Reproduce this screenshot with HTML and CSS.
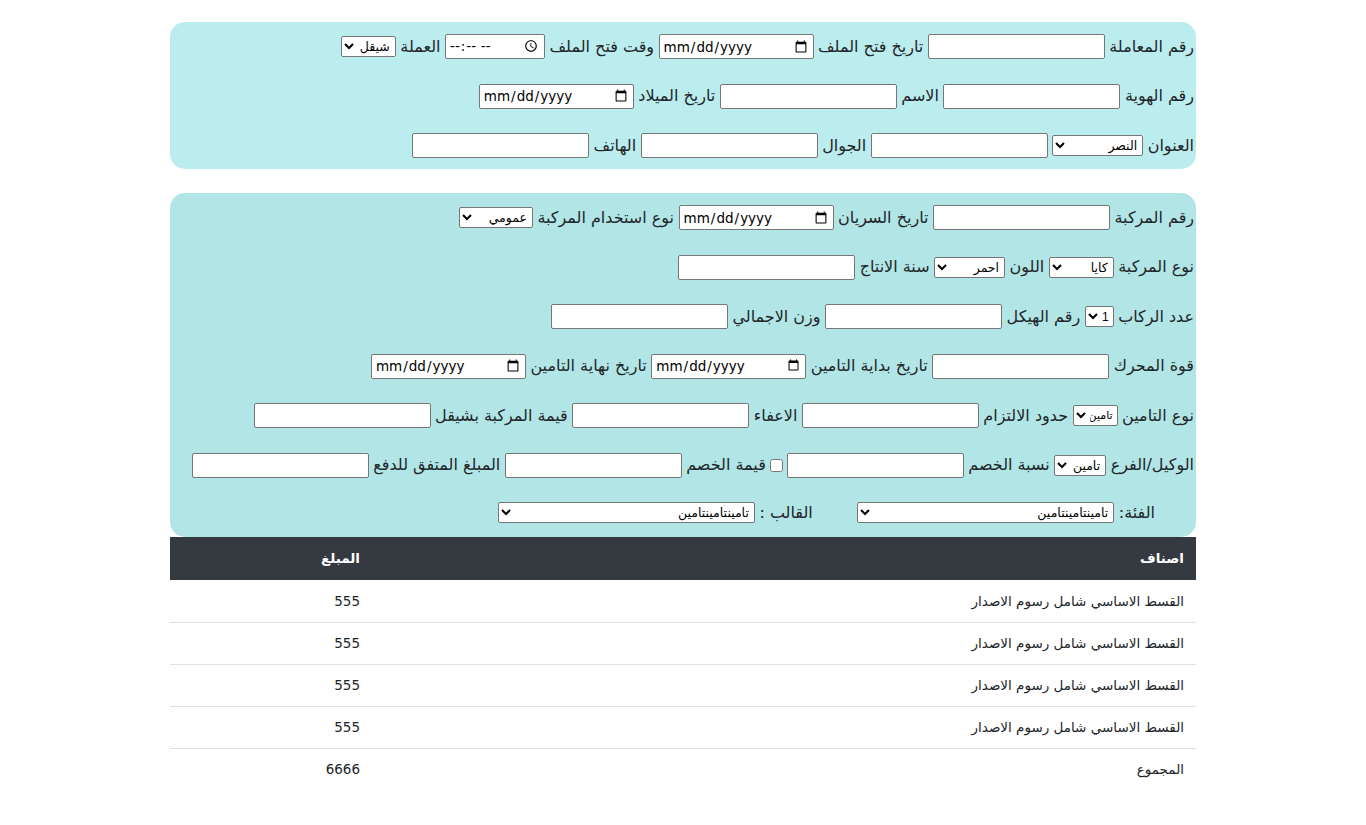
FILE: index.html
```html
<!DOCTYPE html>
<html lang="ar" dir="rtl">
<head>
<meta charset="utf-8">
<title>وثيقة تأمين مركبة</title>
<link rel="stylesheet" href="styles.css">
</head>
<body>
<main class="page">
  <section class="panel panel-client">
    <div class="row">
      <label class="lbl">رقم المعاملة</label>
      <input type="text" class="field">
      <label class="lbl">تاريخ فتح الملف</label>
      <input type="date" class="field field-date">
      <label class="lbl">وقت فتح الملف</label>
      <input type="time" class="field field-time">
      <label class="lbl">العملة</label>
      <select class="sel sel-currency"><option>شيقل</option></select>
    </div>
    <div class="row">
      <label class="lbl">رقم الهوية</label>
      <input type="text" class="field">
      <label class="lbl">الاسم</label>
      <input type="text" class="field">
      <label class="lbl">تاريخ الميلاد</label>
      <input type="date" class="field field-date">
    </div>
    <div class="row">
      <label class="lbl">العنوان</label>
      <select class="sel sel-city"><option>النصر</option></select>
      <input type="text" class="field">
      <label class="lbl">الجوال</label>
      <input type="text" class="field">
      <label class="lbl">الهاتف</label>
      <input type="text" class="field">
    </div>
  </section>

  <section class="panel panel-vehicle">
    <div class="row">
      <label class="lbl">رقم المركبة</label>
      <input type="text" class="field">
      <label class="lbl">تاريخ السريان</label>
      <input type="date" class="field field-date">
      <label class="lbl">نوع استخدام المركبة</label>
      <select class="sel sel-usage"><option>عمومي</option></select>
    </div>
    <div class="row">
      <label class="lbl">نوع المركبة</label>
      <select class="sel sel-make"><option>كايا</option></select>
      <label class="lbl">اللون</label>
      <select class="sel sel-color"><option>احمر</option></select>
      <label class="lbl">سنة الانتاج</label>
      <input type="text" class="field">
    </div>
    <div class="row">
      <label class="lbl">عدد الركاب</label>
      <select class="sel sel-seats" lang="en"><option>1</option></select>
      <label class="lbl">رقم الهيكل</label>
      <input type="text" class="field">
      <label class="lbl">وزن الاجمالي</label>
      <input type="text" class="field">
    </div>
    <div class="row">
      <label class="lbl">قوة المحرك</label>
      <input type="text" class="field">
      <label class="lbl">تاريخ بداية التامين</label>
      <input type="date" class="field field-date">
      <label class="lbl">تاريخ نهاية التامين</label>
      <input type="date" class="field field-date">
    </div>
    <div class="row">
      <label class="lbl">نوع التامين</label>
      <select class="sel sel-ins"><option>تامين</option></select>
      <label class="lbl">حدود الالتزام</label>
      <input type="text" class="field">
      <label class="lbl">الاعفاء</label>
      <input type="text" class="field">
      <label class="lbl">قيمة المركبة بشيقل</label>
      <input type="text" class="field">
    </div>
    <div class="row">
      <label class="lbl">الوكيل/الفرع</label>
      <select class="sel sel-agent"><option>تامين</option></select>
      <label class="lbl">نسبة الخصم</label>
      <input type="text" class="field">
      <input type="checkbox" class="check">
      <label class="lbl">قيمة الخصم</label>
      <input type="text" class="field">
      <label class="lbl">المبلغ المتفق للدفع</label>
      <input type="text" class="field">
    </div>
    <div class="row row-meta">
      <label class="lbl">الفئة:</label>
      <select class="sel sel-wide"><option>تامينتامينتامين</option></select>
      <label class="lbl lbl-template">القالب :</label>
      <select class="sel sel-wide"><option>تامينتامينتامين</option></select>
    </div>
  </section>

  <table class="items">
    <thead>
      <tr><th>اصناف</th><th class="col-amount">المبلغ</th></tr>
    </thead>
    <tbody>
      <tr><td>القسط الاساسي شامل رسوم الاصدار</td><td>555</td></tr>
      <tr><td>القسط الاساسي شامل رسوم الاصدار</td><td>555</td></tr>
      <tr><td>القسط الاساسي شامل رسوم الاصدار</td><td>555</td></tr>
      <tr><td>القسط الاساسي شامل رسوم الاصدار</td><td>555</td></tr>
      <tr><td>المجموع</td><td>6666</td></tr>
    </tbody>
  </table>
</main>
</body>
</html>
```

FILE: styles.css
```css
html, body {
  margin: 0;
  padding: 0;
  background: #ffffff;
}

body {
  font-family: "DejaVu Sans", "Noto Sans", sans-serif;
  color: #212529;
}

.page {
  width: 1026px;
  margin: 0 auto;
  padding-top: 22px;
  direction: rtl;
}

.panel {
  display: flex;
  flex-direction: column;
  gap: 24.5px;
  padding: 12px 2px 11px 0;
  border-radius: 15px;
}

.panel-client {
  background: #bcedee;
  margin-bottom: 24px;
}

.panel-vehicle {
  background: #b2e6e6;
  padding-bottom: 14px;
}

.row {
  display: flex;
  align-items: center;
  gap: 4.5px;
  height: 25px;
  font-size: 16px;
}

.lbl {
  white-space: nowrap;
  line-height: 1;
}

.field {
  box-sizing: border-box;
  width: 177px;
  height: 25px;
  margin: 0;
  padding: 1px 3px;
  border: 1px solid #767676;
  border-radius: 2px;
  background: #ffffff;
  font-family: "DejaVu Sans", sans-serif;
  font-size: 13.5px;
  color: #000;
}

.field-date {
  width: 155px;
  direction: ltr;
}

.field-time {
  width: 100px;
}

.sel {
  box-sizing: border-box;
  height: 21px;
  margin: 0;
  padding: 0 1px;
  font-family: "DejaVu Sans", sans-serif;
  font-size: 12.5px;
  color: #000;
  background: #ffffff;
  border: 1px solid #767676;
  border-radius: 2px;
}

.sel-currency { width: 55px; }
.sel-city { width: 91px; }
.sel-usage { width: 74px; }
.sel-make { width: 65px; }
.sel-color { width: 71px; }
.sel-seats {
  width: 29px;
  padding: 0;
  font-family: "Liberation Sans", sans-serif;
  font-size: 12px;
}
.sel-ins {
  width: 45px;
  font-size: 11px;
  padding: 0;
}
.sel-agent { width: 52px; }
.sel-wide { width: 257px; }

.check {
  width: 13px;
  height: 13px;
  margin: 0 -1px 0 0;
}

.row-meta {
  height: 21px;
  padding-right: 39px;
}

.lbl-template {
  margin-right: 40px;
}

.items {
  width: 100%;
  border-collapse: collapse;
  font-size: 13.5px;
  color: #212529;
}

.items th {
  background: #343a40;
  color: #ffffff;
  font-weight: bold;
  text-align: right;
  padding: 12px;
  line-height: 19px;
  border-bottom: 0;
}

.items td {
  text-align: right;
  padding: 12px;
  line-height: 17px;
  border-top: 1px solid #dee2e6;
}

.items thead + tbody tr:first-child td {
  border-top: 0;
}

.items tbody tr:first-child td {
  line-height: 18px;
}

.col-amount {
  width: 178px;
}
```
